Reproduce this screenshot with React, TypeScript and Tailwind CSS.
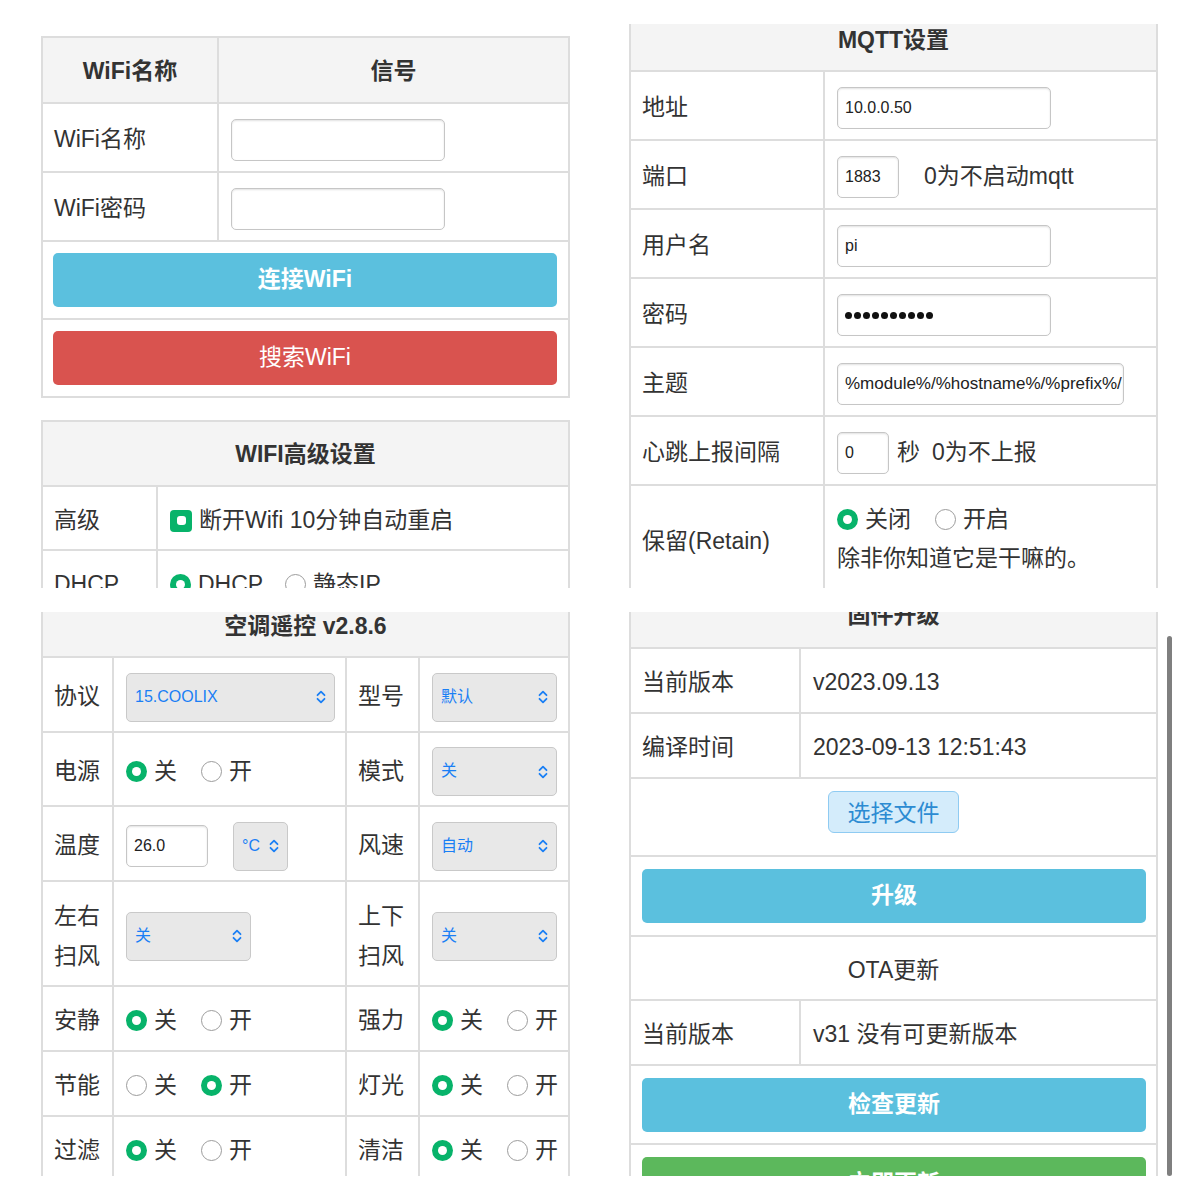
import React from 'react';

const FONT = { fontFamily: '"Liberation Sans", "Noto Sans CJK SC", sans-serif' };

const Radio = ({ on }: { on: boolean }) =>
  on ? (
    <span className="flex h-[21px] w-[21px] shrink-0 items-center justify-center rounded-full bg-[#07b36a]">
      <span className="h-[9px] w-[9px] rounded-full bg-white" />
    </span>
  ) : (
    <span className="h-[21px] w-[21px] shrink-0 rounded-full border border-[#9c9c9c] bg-white" />
  );

const OnOff = ({ on }: { on: boolean }) => (
  <div className="flex items-center">
    <Radio on={!on} />
    <span className="ml-[7px] w-[47px]">关</span>
    <Radio on={on} />
    <span className="ml-[7px]">开</span>
  </div>
);

const Chevron = () => (
  <svg width="10" height="14" viewBox="0 0 10 14" className="shrink-0">
    <path
      d="M1.5 5.2 5 1.7 8.5 5.2M1.5 8.8 5 12.3 8.5 8.8"
      fill="none"
      stroke="#1a7ff5"
      strokeWidth="1.8"
      strokeLinecap="round"
      strokeLinejoin="round"
    />
  </svg>
);

const Select = ({ text, w }: { text: string; w: string }) => (
  <div
    className={`flex h-[49px] ${w} items-center justify-between rounded-[5px] border border-[#c9c9c9] bg-[#e8e8e8] pl-[8px] pr-[8px] text-[16px] text-[#1a7ff5]`}
  >
    <span>{text}</span>
    <Chevron />
  </div>
);

const Input = ({ w, children }: { w: string; children?: React.ReactNode }) => (
  <div
    className={`flex h-[42px] ${w} items-center overflow-hidden whitespace-nowrap rounded-[5px] border border-[#c6c6c6] bg-white pl-[7px] text-[16px] text-[#222] shadow-[inset_0_1px_2px_rgba(0,0,0,0.12)]`}
  >
    {children}
  </div>
);

const Btn = ({ text, color, bold }: { text: string; color: string; bold?: boolean }) => (
  <div
    className={`flex h-[54px] w-full items-center justify-center rounded-[5px] text-[23px] text-white ${color} ${bold ? 'font-bold' : ''}`}
  >
    {text}
  </div>
);

const Label = ({ children }: { children: React.ReactNode }) => (
  <div className="flex items-center bg-white pl-[11px] pt-[5px]">{children}</div>
);

const Cell = ({ children }: { children?: React.ReactNode }) => (
  <div className="flex items-center bg-white pl-[12px] pt-[5px]">{children}</div>
);

const WifiPanel = () => (
  <div className="h-[588px] overflow-hidden pt-[36px]">
    <div className="grid grid-cols-[174px_1fr] grid-rows-[64px_67px_67px_76px_76px] gap-[2px] bg-[#dddddd] p-[2px]">
      <div className="flex items-center justify-center bg-[#f4f4f4] pt-[3px] font-bold">WiFi名称</div>
      <div className="flex items-center justify-center bg-[#f4f4f4] pt-[3px] font-bold">信号</div>
      <Label>WiFi名称</Label>
      <Cell>
        <Input w="w-[214px]" />
      </Cell>
      <Label>WiFi密码</Label>
      <Cell>
        <Input w="w-[214px]" />
      </Cell>
      <div className="col-span-2 flex items-center bg-white pl-[10px] pr-[11px]">
        <Btn text="连接WiFi" color="bg-[#5bc0de]" bold />
      </div>
      <div className="col-span-2 flex items-center bg-white pl-[10px] pr-[11px]">
        <Btn text="搜索WiFi" color="bg-[#d9534f]" />
      </div>
    </div>

    <div className="mt-[22px] grid grid-cols-[113px_1fr] grid-rows-[63px_62px_62px] gap-[2px] bg-[#dddddd] p-[2px]">
      <div className="col-span-2 flex items-center justify-center bg-[#f4f4f4] pt-[3px] font-bold">WIFI高级设置</div>
      <Label>高级</Label>
      <Cell>
        <span className="flex h-[22px] w-[22px] items-center justify-center rounded-[4px] bg-[#07b36a]">
          <span className="h-[9px] w-[9px] rounded-[3px] bg-white" />
        </span>
        <span className="ml-[7px]">断开Wifi 10分钟自动重启</span>
      </Cell>
      <Label>DHCP</Label>
      <Cell>
        <Radio on />
        <span className="ml-[7px] w-[87px]">DHCP</span>
        <Radio on={false} />
        <span className="ml-[7px]">静态IP</span>
      </Cell>
    </div>
  </div>
);

const MqttPanel = () => (
  <div className="h-[588px] w-[529px] overflow-hidden pt-[24px]">
    <div className="grid grid-cols-[192px_1fr] grid-rows-[46px_67px_67px_67px_67px_67px_67px_106px] gap-[2px] bg-[#dddddd] px-[2px] pb-[2px]">
      <div className="col-span-2 flex items-center justify-center bg-[#f4f4f4] pb-[13px] font-bold">MQTT设置</div>
      <Label>地址</Label>
      <Cell>
        <Input w="w-[214px]">10.0.0.50</Input>
      </Cell>
      <Label>端口</Label>
      <Cell>
        <Input w="w-[62px]">1883</Input>
        <span className="ml-[25px]">0为不启动mqtt</span>
      </Cell>
      <Label>用户名</Label>
      <Cell>
        <Input w="w-[214px]">pi</Input>
      </Cell>
      <Label>密码</Label>
      <Cell>
        <Input w="w-[214px]">
          <div className="flex gap-[2px]">
            {Array.from({ length: 10 }).map((_, i) => (
              <span key={i} className="h-[7px] w-[7px] rounded-full bg-[#111]" />
            ))}
          </div>
        </Input>
      </Cell>
      <Label>主题</Label>
      <Cell>
        <Input w="w-[287px]">
          <span className="text-[17px]">%module%/%hostname%/%prefix%/</span>
        </Input>
      </Cell>
      <Label>心跳上报间隔</Label>
      <Cell>
        <Input w="w-[52px]">0</Input>
        <span className="ml-[8px]">秒</span>
        <span className="ml-[12px]">0为不上报</span>
      </Cell>
      <Label>保留(Retain)</Label>
      <div className="flex flex-col justify-center bg-white pl-[12px]">
        <div className="flex items-center">
          <Radio on />
          <span className="ml-[7px] w-[70px]">关闭</span>
          <Radio on={false} />
          <span className="ml-[7px]">开启</span>
        </div>
        <div className="mt-[9px]">除非你知道它是干嘛的。</div>
      </div>
    </div>
  </div>
);

const AcPanel = () => (
  <div className="h-[564px] overflow-hidden">
    <div className="grid grid-cols-[69px_231px_71px_1fr] grid-rows-[44px_73px_72px_73px_103px_63px_63px_63px] gap-[2px] bg-[#dddddd] px-[2px] pb-[2px]">
      <div className="col-span-4 flex items-center justify-center bg-[#f4f4f4] pb-[15px] font-bold">空调遥控 v2.8.6</div>

      <Label>协议</Label>
      <Cell>
        <Select text="15.COOLIX" w="w-[209px]" />
      </Cell>
      <Label>型号</Label>
      <Cell>
        <Select text="默认" w="w-[125px]" />
      </Cell>

      <Label>电源</Label>
      <Cell>
        <OnOff on={false} />
      </Cell>
      <Label>模式</Label>
      <Cell>
        <Select text="关" w="w-[125px]" />
      </Cell>

      <Label>温度</Label>
      <Cell>
        <Input w="w-[82px]">26.0</Input>
        <div className="ml-[25px] flex h-[49px] w-[55px] items-center justify-between rounded-[5px] border border-[#c9c9c9] bg-[#e8e8e8] pl-[8px] pr-[8px] text-[16px] text-[#1a7ff5]">
          <span>°C</span>
          <Chevron />
        </div>
      </Cell>
      <Label>风速</Label>
      <Cell>
        <Select text="自动" w="w-[125px]" />
      </Cell>

      <Label>
        <span className="leading-[40px]">
          左右
          <br />
          扫风
        </span>
      </Label>
      <Cell>
        <Select text="关" w="w-[125px]" />
      </Cell>
      <Label>
        <span className="leading-[40px]">
          上下
          <br />
          扫风
        </span>
      </Label>
      <Cell>
        <Select text="关" w="w-[125px]" />
      </Cell>

      <Label>安静</Label>
      <Cell>
        <OnOff on={false} />
      </Cell>
      <Label>强力</Label>
      <Cell>
        <OnOff on={false} />
      </Cell>

      <Label>节能</Label>
      <Cell>
        <OnOff on />
      </Cell>
      <Label>灯光</Label>
      <Cell>
        <OnOff on={false} />
      </Cell>

      <Label>过滤</Label>
      <Cell>
        <OnOff on={false} />
      </Cell>
      <Label>清洁</Label>
      <Cell>
        <OnOff on={false} />
      </Cell>
    </div>
  </div>
);

const FirmwarePanel = () => (
  <div className="flex h-[564px] overflow-hidden">
    <div className="w-[529px] shrink-0">
      <div className="grid grid-cols-[168px_1fr] grid-rows-[35px_63px_63px_76px_78px_62px_63px_77px_60px] gap-[2px] bg-[#dddddd] px-[2px] pb-[2px]">
        <div className="col-span-2 flex items-center justify-center bg-[#f4f4f4] pb-[27px] font-bold">固件升级</div>
        <Label>当前版本</Label>
        <Cell>v2023.09.13</Cell>
        <Label>编译时间</Label>
        <Cell>2023-09-13 12:51:43</Cell>
        <div className="col-span-2 flex justify-center bg-white pt-[12px]">
          <div className="flex h-[42px] w-[131px] items-center justify-center rounded-[6px] border border-[#8fcbf2] bg-[#d4ecfb] pt-[3px] text-[#2c8bd2]">
            选择文件
          </div>
        </div>
        <div className="col-span-2 flex items-center bg-white pl-[11px] pr-[10px]">
          <Btn text="升级" color="bg-[#5bc0de]" bold />
        </div>
        <div className="col-span-2 flex items-center justify-center bg-white pt-[5px]">OTA更新</div>
        <Label>当前版本</Label>
        <Cell>v31 没有可更新版本</Cell>
        <div className="col-span-2 flex items-center bg-white pl-[11px] pr-[10px]">
          <Btn text="检查更新" color="bg-[#5bc0de]" bold />
        </div>
        <div className="col-span-2 bg-white pl-[11px] pr-[10px] pt-[12px]">
          <Btn text="立即更新" color="bg-[#5cb85c]" bold />
        </div>
      </div>
    </div>
    <div className="ml-[9px] mt-[24px] w-[5px] shrink-0 rounded-full bg-[#7f7f7f]" />
  </div>
);

export default function App() {
  return (
    <div className="h-[1200px] w-[1200px] bg-white pl-[41px] text-[23px] text-[#333] leading-[1.3]" style={FONT}>
      <div className="grid grid-cols-[529px_545px] gap-x-[59px] gap-y-[24px]">
        <WifiPanel />
        <MqttPanel />
        <AcPanel />
        <FirmwarePanel />
      </div>
    </div>
  );
}
